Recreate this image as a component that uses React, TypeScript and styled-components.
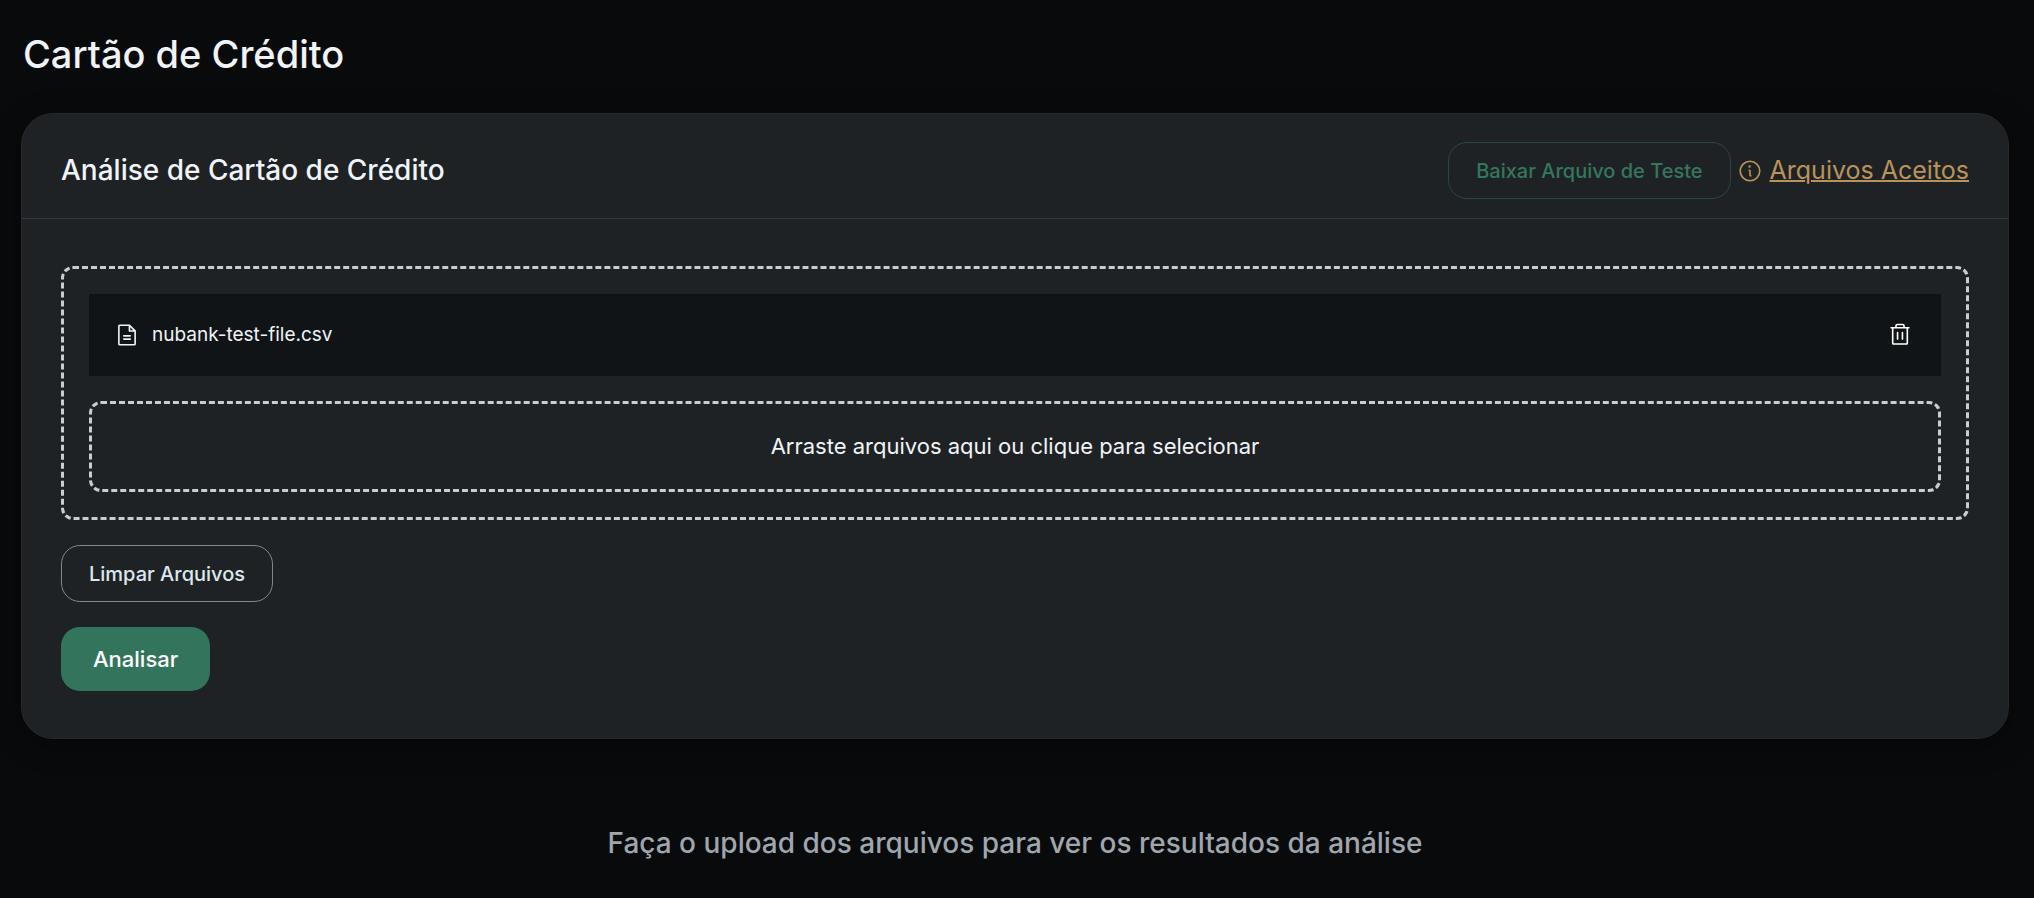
import React from "react";
import styled, { createGlobalStyle } from "styled-components";
import { PiFileText, PiInfo, PiTrash } from "react-icons/pi";

const GlobalStyle = createGlobalStyle`
  *, *::before, *::after { box-sizing: border-box; }
  body {
    margin: 0;
    background: #090a0b;
    color: #f0f4f8;
    font-family: Inter, "Liberation Sans", sans-serif;
    font-size: 20px;
    line-height: 30px;
  }
  h1, h2, p { margin: 0; font-weight: 500; }
`;

const Page = styled.main`
  display: flex;
  flex-direction: column;
  padding: 30px 25px 0 21px;
`;

const PageTitle = styled.h1`
  padding-left: 2px;
  font-size: 38px;
  line-height: 48px;
`;

const Card = styled.section`
  margin-top: 35px;
  border: 1px solid #272829;
  border-radius: 32px;
  background: #1f2224;
  box-shadow: 0 6px 28px rgba(0, 0, 0, 0.35);
`;

const CardHeader = styled.header`
  display: flex;
  align-items: center;
  justify-content: space-between;
  padding: 28px 39px 19px;
  border-bottom: 1px solid #32383e;
`;

const CardTitle = styled.h2`
  font-size: 28px;
  line-height: 37px;
`;

const Actions = styled.div`
  display: flex;
  align-items: center;
  gap: 6px;
`;

const CardBody = styled.div`
  display: flex;
  flex-direction: column;
  align-items: flex-start;
  gap: 25px;
  padding: 47px 39px 47px;
`;

const OutlineButton = styled.button<{ $tone: "green" | "light" }>`
  height: 57px;
  padding: 0 27px;
  border: 1px solid ${(p) => (p.$tone === "green" ? "#27493f" : "#84878a")};
  border-radius: 19px;
  background: transparent;
  color: ${(p) => (p.$tone === "green" ? "#34775d" : "#dde7ee")};
  font: 500 20px/30px Inter, "Liberation Sans", sans-serif;
`;

const SolidButton = styled.button`
  height: 64px;
  padding: 0 32px;
  border: 0;
  border-radius: 19px;
  background: #33755c;
  color: #fff;
  font: 500 22px/30px Inter, "Liberation Sans", sans-serif;
`;

const InfoLink = styled.a`
  display: flex;
  align-items: center;
  gap: 7px;
  color: #b8935a;
  font-size: 25px;
  line-height: 31px;
  text-decoration: none;

  span { text-decoration: underline; text-decoration-thickness: 2px; }
`;

const dashed = `
  border: 3px dashed #ccc;
  border-radius: 12px;
`;

const UploadArea = styled.div`
  display: flex;
  flex-direction: column;
  gap: 25px;
  width: 100%;
  padding: 25px;
  ${dashed}
`;

const FileRow = styled.div`
  display: flex;
  align-items: center;
  gap: 12px;
  height: 82px;
  padding: 0 28px 0 25px;
  background: #111417;
  font-size: 19px;
`;

const FileName = styled.span`
  flex: 1;
`;

const IconButton = styled.button`
  display: flex;
  padding: 0;
  border: 0;
  background: none;
  color: #fff;
`;

const DropTarget = styled.label`
  display: block;
  padding: 28px;
  text-align: center;
  font-size: 22px;
  line-height: 29px;
  ${dashed}

  input {
    display: none;
  }
`;

const Hint = styled.p`
  margin-top: 84px;
  color: #9fa6ad;
  font-size: 28px;
  line-height: 40px;
  text-align: center;
`;

export default function App() {
  return (
    <>
      <GlobalStyle />
      <Page>
        <PageTitle>Cartão de Crédito</PageTitle>
        <Card>
          <CardHeader>
            <CardTitle>Análise de Cartão de Crédito</CardTitle>
            <Actions>
              <OutlineButton type="button" $tone="green">Baixar Arquivo de Teste</OutlineButton>
              <InfoLink href="#arquivos-aceitos">
                <PiInfo size={26} />
                <span>Arquivos Aceitos</span>
              </InfoLink>
            </Actions>
          </CardHeader>
          <CardBody>
            <UploadArea>
              <FileRow>
                <PiFileText size={26} />
                <FileName>nubank-test-file.csv</FileName>
                <IconButton type="button" aria-label="Remover nubank-test-file.csv">
                  <PiTrash size={26} />
                </IconButton>
              </FileRow>
              <DropTarget>
                Arraste arquivos aqui ou clique para selecionar
                <input type="file" multiple />
              </DropTarget>
            </UploadArea>
            <OutlineButton type="button" $tone="light">Limpar Arquivos</OutlineButton>
            <SolidButton type="button">Analisar</SolidButton>
          </CardBody>
        </Card>
        <Hint>Faça o upload dos arquivos para ver os resultados da análise</Hint>
      </Page>
    </>
  );
}
